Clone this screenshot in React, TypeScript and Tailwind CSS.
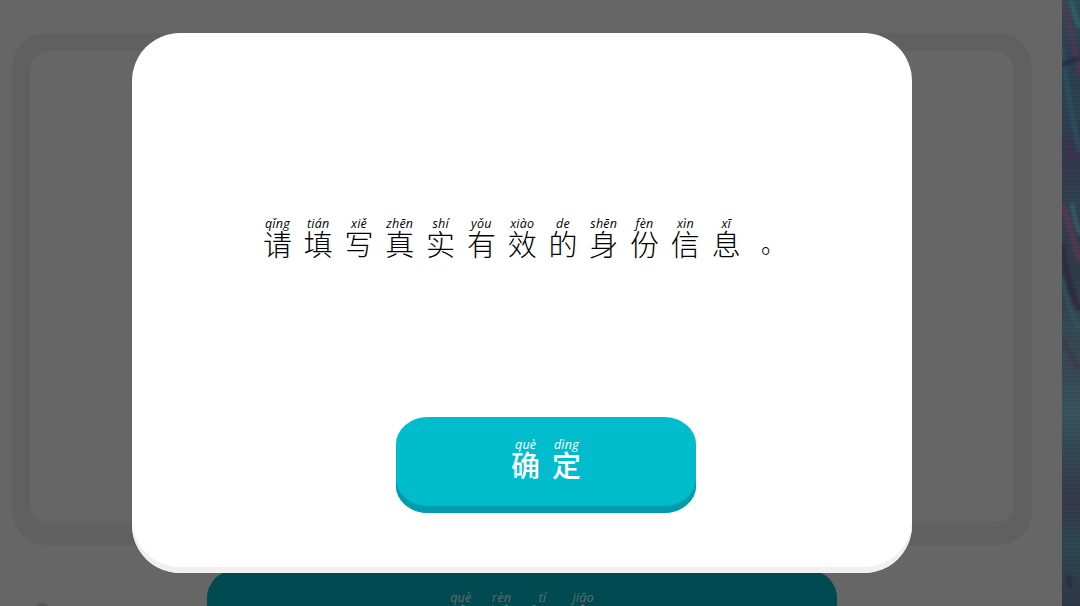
import clsx from "clsx";

type Syllable = {
  hanzi: string;
  pinyin: string;
};

const message: Syllable[] = [
  { hanzi: "请", pinyin: "qǐng" },
  { hanzi: "填", pinyin: "tián" },
  { hanzi: "写", pinyin: "xiě" },
  { hanzi: "真", pinyin: "zhēn" },
  { hanzi: "实", pinyin: "shí" },
  { hanzi: "有", pinyin: "yǒu" },
  { hanzi: "效", pinyin: "xiào" },
  { hanzi: "的", pinyin: "de" },
  { hanzi: "身", pinyin: "shēn" },
  { hanzi: "份", pinyin: "fèn" },
  { hanzi: "信", pinyin: "xìn" },
  { hanzi: "息", pinyin: "xī" },
  { hanzi: "。", pinyin: "" },
];

const confirmLabel: Syllable[] = [
  { hanzi: "确", pinyin: "què" },
  { hanzi: "定", pinyin: "dìng" },
];

const submitLabel: Syllable[] = [
  { hanzi: "确", pinyin: "què" },
  { hanzi: "认", pinyin: "rèn" },
  { hanzi: "提", pinyin: "tí" },
  { hanzi: "交", pinyin: "jiāo" },
];

type PinyinTextProps = {
  text: Syllable[];
  className?: string;
};

function PinyinText({ text, className }: PinyinTextProps) {
  return (
    <div className={clsx("flex", className)}>
      {text.map(({ hanzi, pinyin }, index) => (
        <span key={index} className="flex w-[40.8px] shrink-0 flex-col items-center">
          <span className="h-3 font-['Open_Sans','Noto_Sans',sans-serif] text-[12.5px] leading-[12px] font-medium tracking-[0.2px] italic">
            {pinyin}
          </span>
          <span
            className={clsx(
              "font-['Noto_Sans_CJK_SC',sans-serif]",
              hanzi === "。" ? "pl-3 text-[24px] leading-[30px]" : "text-[29px] leading-[26px]",
            )}
          >
            {hanzi}
          </span>
        </span>
      ))}
    </div>
  );
}

function Wallpaper() {
  return (
    <svg className="h-full w-[18px] shrink-0" viewBox="0 0 18 606" preserveAspectRatio="none">
      <defs>
        <linearGradient id="base" x1="0" y1="0" x2="0" y2="1">
          <stop offset="0" stopColor="#304d57" />
          <stop offset="0.1" stopColor="#2f3d50" />
          <stop offset="0.17" stopColor="#2c4353" />
          <stop offset="0.25" stopColor="#343750" />
          <stop offset="0.33" stopColor="#30414f" />
          <stop offset="0.46" stopColor="#303b49" />
          <stop offset="0.54" stopColor="#354b54" />
          <stop offset="0.6" stopColor="#384753" />
          <stop offset="0.68" stopColor="#3a555e" />
          <stop offset="0.74" stopColor="#344956" />
          <stop offset="0.83" stopColor="#37394b" />
          <stop offset="0.9" stopColor="#2d4850" />
          <stop offset="1" stopColor="#303746" />
        </linearGradient>
        <pattern id="scan" width="18" height="4" patternUnits="userSpaceOnUse">
          <rect width="18" height="1.5" fill="#182535" opacity="0.15" />
        </pattern>
        <filter
          id="soft"
          filterUnits="userSpaceOnUse"
          x="-10"
          y="-10"
          width="38"
          height="626"
          colorInterpolationFilters="sRGB"
        >
          <feGaussianBlur stdDeviation="1.6" />
        </filter>
      </defs>
      <rect width="18" height="606" fill="url(#base)" />
      <g fill="none" filter="url(#soft)" opacity="0.85">
        <path d="M2 0Q8 28 18 74" stroke="#6b3153" strokeWidth="3" />
        <path d="M9 0Q12 15 18 28" stroke="#2f6a72" strokeWidth="4" />
        <path d="M0 48Q8 110 18 152" stroke="#2b5662" strokeWidth="4" />
        <path d="M0 65L16 58" stroke="#252b47" strokeWidth="5" />
        <path d="M6 140L9 160" stroke="#46304f" strokeWidth="4" />
        <path d="M1 205Q9 230 18 262" stroke="#663452" strokeWidth="5" />
        <path d="M10 203Q13 222 18 234" stroke="#326770" strokeWidth="4" />
        <path d="M0 244Q6 290 18 310" stroke="#30283d" strokeWidth="6" />
        <path d="M0 278Q6 310 18 330" stroke="#2f5d68" strokeWidth="3" />
        <path d="M1 340L17 370" stroke="#403446" strokeWidth="3" />
        <path d="M7 576L8 588" stroke="#27283d" strokeWidth="4" />
      </g>
      <rect width="18" height="606" fill="url(#scan)" />
    </svg>
  );
}

function FormPage() {
  return (
    <div className="flex h-full flex-col pt-[33px]">
      <div className="ml-3 h-[512px] w-[1020px] shrink-0 rounded-[34px] bg-[#f0f0f0] p-[18px] pb-[17px]">
        <div className="h-full rounded-[20px] bg-white shadow-[inset_0_-6px_0_#f6f6f6]" />
      </div>
      <div className="mt-[25px] flex h-24 shrink-0">
        <div className="mt-[33px] ml-[33px] size-[18px] rounded-full bg-[#d8d8d8]" />
        <button className="ml-[156px] flex h-24 w-[630px] justify-center rounded-[28px] bg-[#00bccd] pt-[22px] text-white">
          <PinyinText text={submitLabel} className="font-medium" />
        </button>
      </div>
    </div>
  );
}

function ConfirmDialog() {
  return (
    <div className="absolute inset-0 bg-black/60 pt-[33px] pl-[132px]">
      <div className="flex h-[540px] w-[780px] flex-col rounded-[48px] bg-white pt-[185px] text-black shadow-[inset_0_-6px_0_#f0f0f0]">
        <PinyinText text={message} className="ml-[125px] h-10 font-light" />
        <button className="mt-[159px] ml-[264px] flex h-24 w-[300px] justify-center rounded-[32px/27px] bg-[#00bccd] pt-[22px] text-white shadow-[inset_0_-7px_1px_#009cab]">
          <PinyinText text={confirmLabel} className="font-medium" />
        </button>
      </div>
    </div>
  );
}

export default function App() {
  return (
    <div className="flex h-[606px] w-[1080px] overflow-hidden bg-white">
      <main className="relative h-full w-[1062px] overflow-hidden">
        <FormPage />
        <ConfirmDialog />
      </main>
      <Wallpaper />
    </div>
  );
}
